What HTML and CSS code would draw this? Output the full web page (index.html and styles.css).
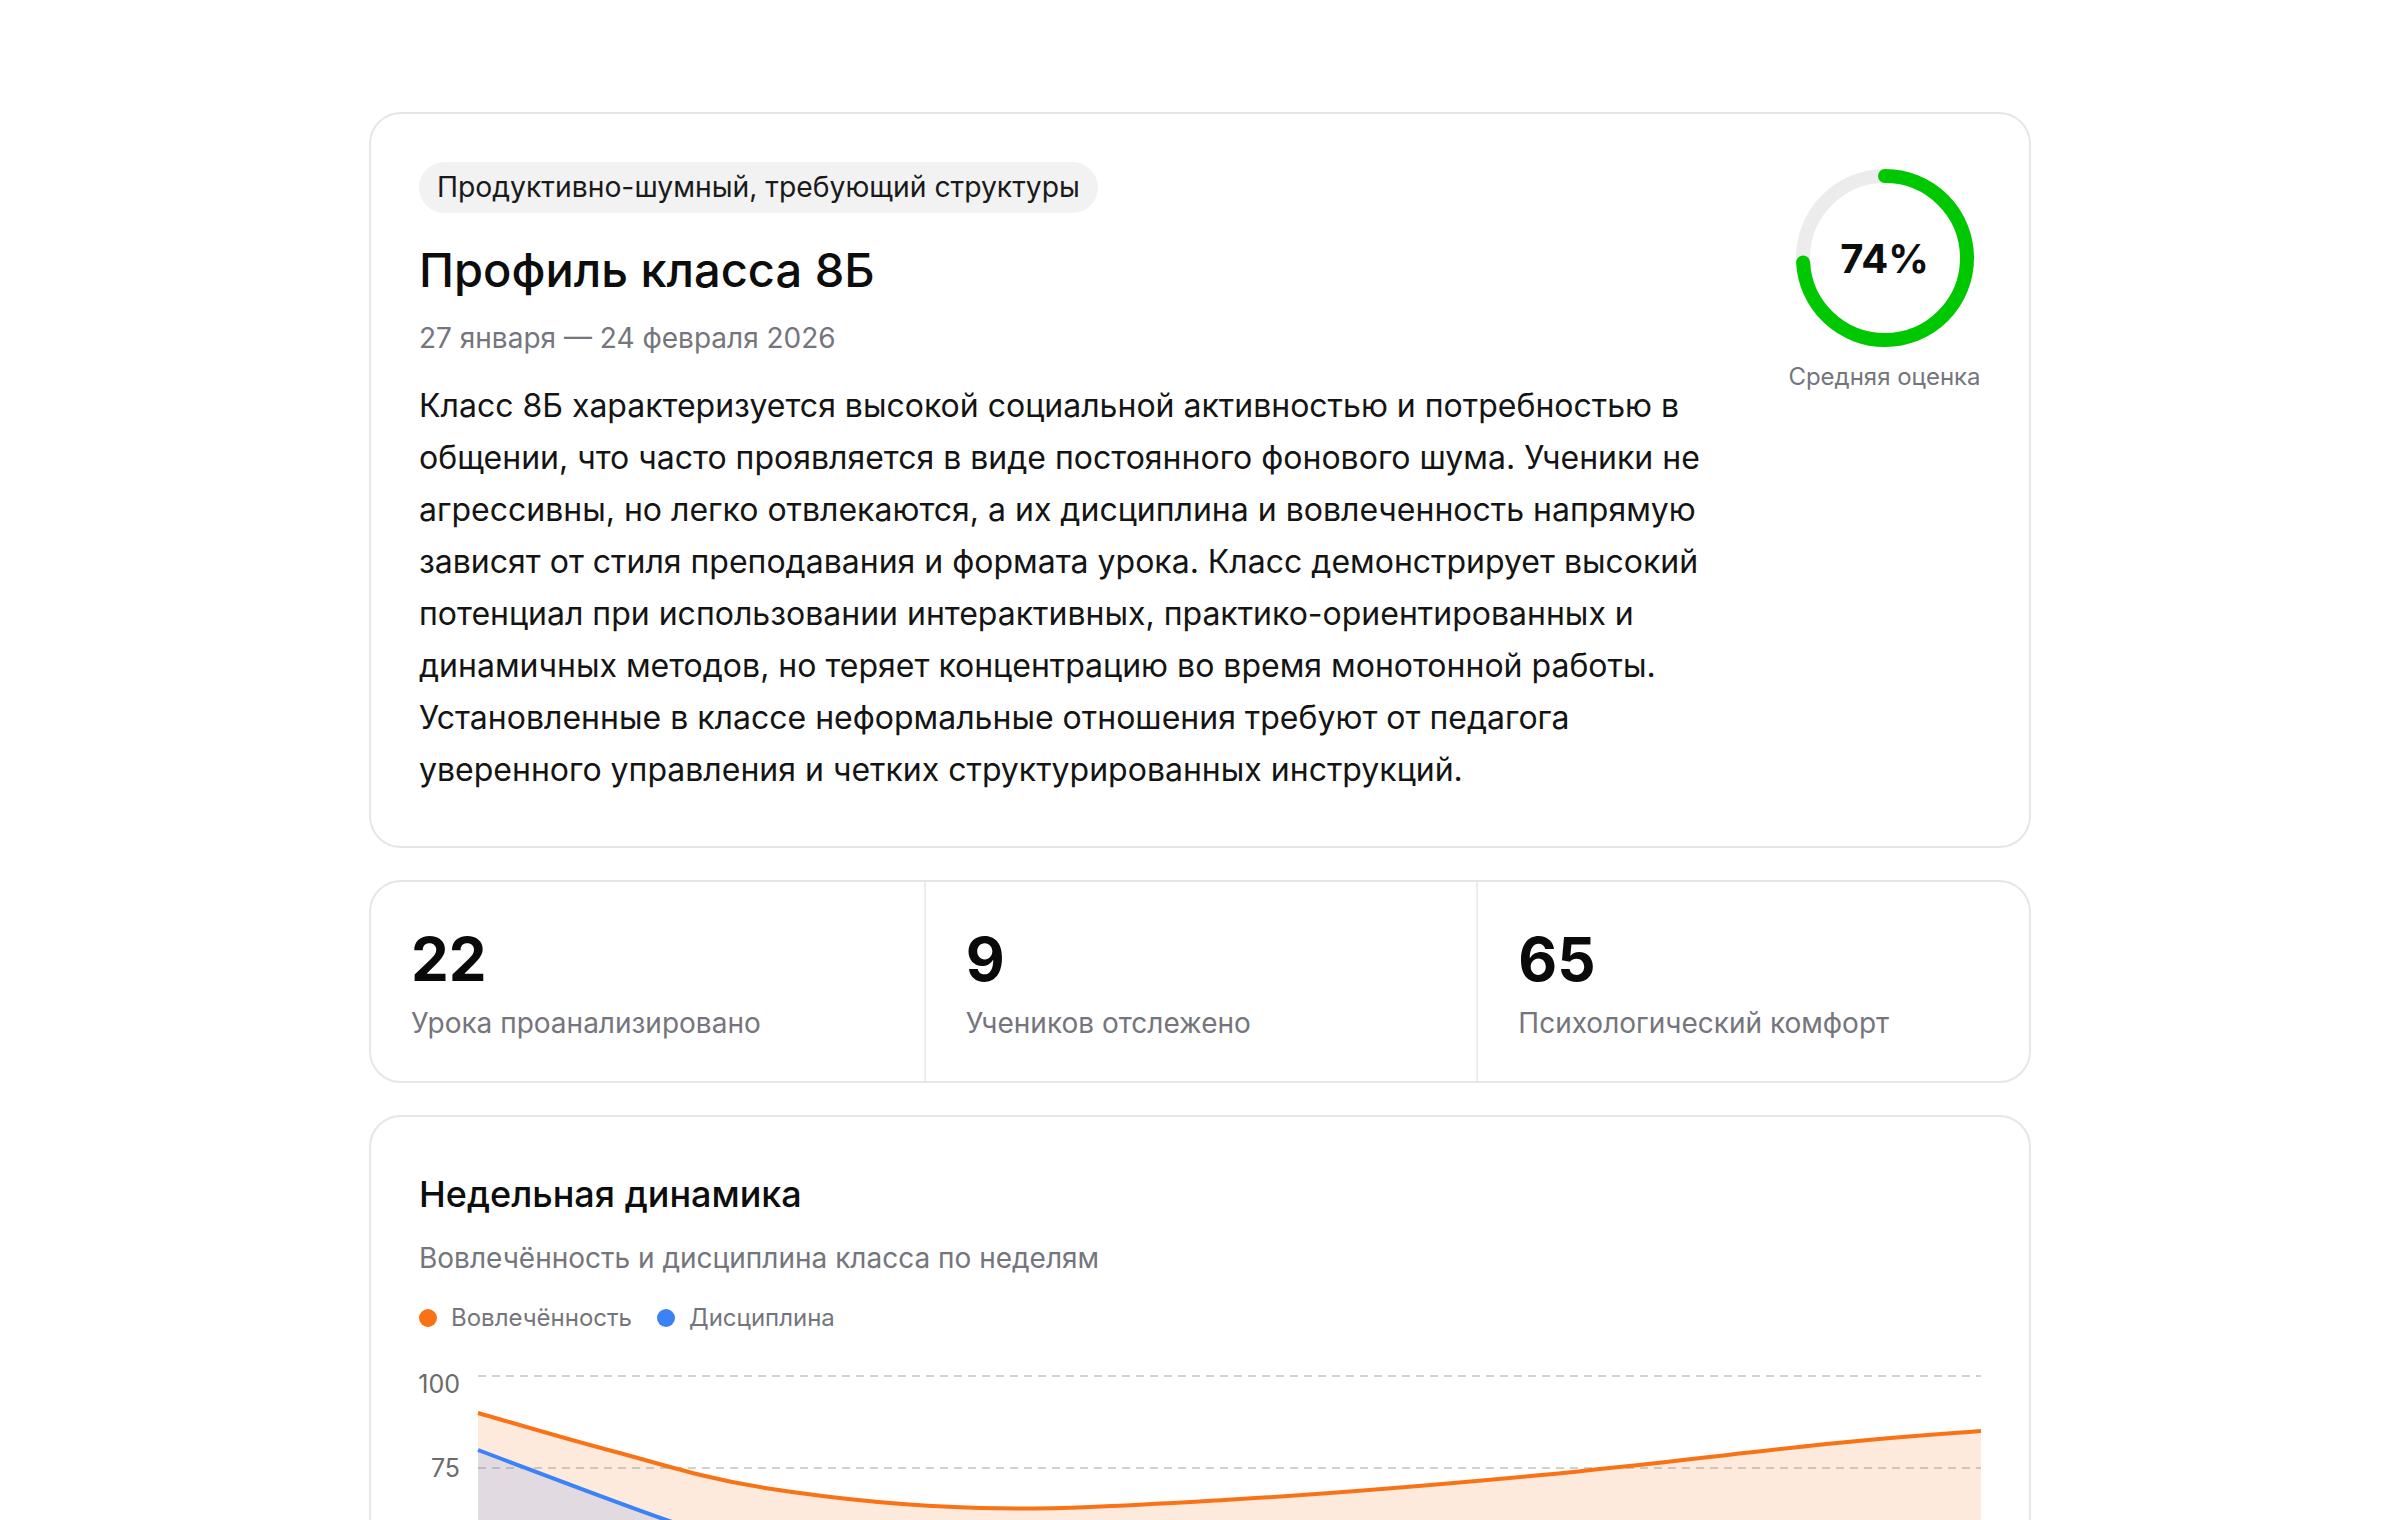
FILE: index.html
```html
<!DOCTYPE html>
<html lang="ru">
<head>
<meta charset="utf-8">
<title>Профиль класса 8Б</title>
<link rel="stylesheet" href="styles.css">
</head>
<body>
<main class="page">
  <section class="card profile">
    <div class="profile-main">
      <span class="tag">Продуктивно-шумный, требующий структуры</span>
      <h1 class="title">Профиль класса 8Б</h1>
      <div class="date">27 января — 24 февраля 2026</div>
      <p class="desc">Класс 8Б характеризуется высокой социальной активностью и потребностью в общении, что часто проявляется в виде постоянного фонового шума. Ученики не агрессивны, но легко отвлекаются, а их дисциплина и вовлеченность напрямую зависят от стиля преподавания и формата урока. Класс демонстрирует высокий потенциал при использовании интерактивных, практико-ориентированных и динамичных методов, но теряет концентрацию во время монотонной работы. Установленные в классе неформальные отношения требуют от педагога уверенного управления и четких структурированных инструкций.</p>
    </div>
    <div class="score">
      <div class="ring">
        <svg class="ring-svg" viewBox="0 0 178 178" width="178" height="178">
          <circle class="ring-track" cx="89" cy="89" r="82"></circle>
          <circle class="ring-bar" cx="89" cy="89" r="82" stroke-dasharray="381.3 515.2" transform="rotate(-90 89 89)"></circle>
        </svg>
        <span class="ring-value">74%</span>
      </div>
      <div class="score-label">Средняя оценка</div>
    </div>
  </section>

  <section class="card stats">
    <div class="stat">
      <div class="stat-num">22</div>
      <div class="stat-label">Урока проанализировано</div>
    </div>
    <div class="stat">
      <div class="stat-num">9</div>
      <div class="stat-label">Учеников отслежено</div>
    </div>
    <div class="stat">
      <div class="stat-num">65</div>
      <div class="stat-label">Психологический комфорт</div>
    </div>
  </section>

  <section class="card chart-card">
    <h2 class="chart-title">Недельная динамика</h2>
    <div class="chart-sub">Вовлечённость и дисциплина класса по неделям</div>
    <div class="legend">
      <span class="legend-item"><span class="dot dot-orange"></span>Вовлечённость</span>
      <span class="legend-item"><span class="dot dot-blue"></span>Дисциплина</span>
    </div>
    <svg class="chart" viewBox="0 0 1562 440" width="1562" height="440">
      <g class="grid">
        <line x1="59" y1="16" x2="1562" y2="16"></line>
        <line x1="59" y1="108" x2="1562" y2="108"></line>
        <line x1="59" y1="200" x2="1562" y2="200"></line>
        <line x1="59" y1="292" x2="1562" y2="292"></line>
        <line x1="59" y1="384" x2="1562" y2="384"></line>
      </g>
      <g class="ylabels">
        <text x="41" y="33">100</text>
        <text x="41" y="117">75</text>
        <text x="41" y="209">50</text>
        <text x="41" y="301">25</text>
        <text x="41" y="393">0</text>
      </g>
      <path class="area-orange" d="M59,53 C81.3,59.3 145.2,78.5 193,91 C240.8,103.5 284.7,118.5 346,128 C407.3,137.5 484.5,146 561,148 C637.5,150 713.2,145.3 805,140 C896.8,134.7 1009.8,125.5 1112,116 C1214.2,106.5 1343,90.5 1418,83 C1493,75.5 1538,73 1562,71 L1562,384 L59,384 Z"></path>
      <path class="area-blue" d="M59,90 C123,114 190,140 250,161 C310,182 370,196 435,205 C560,222 690,232 810,230 C940,228 1060,222 1186,215 C1310,208 1440,196 1562,185 L1562,384 L59,384 Z"></path>
      <path class="line-blue" d="M59,90 C123,114 190,140 250,161 C310,182 370,196 435,205 C560,222 690,232 810,230 C940,228 1060,222 1186,215 C1310,208 1440,196 1562,185"></path>
      <path class="line-orange" d="M59,53 C81.3,59.3 145.2,78.5 193,91 C240.8,103.5 284.7,118.5 346,128 C407.3,137.5 484.5,146 561,148 C637.5,150 713.2,145.3 805,140 C896.8,134.7 1009.8,125.5 1112,116 C1214.2,106.5 1343,90.5 1418,83 C1493,75.5 1538,73 1562,71"></path>
      <g class="xlabels">
        <text x="59" y="424">Нед 1</text>
        <text x="435" y="424">Нед 2</text>
        <text x="810" y="424">Нед 3</text>
        <text x="1186" y="424">Нед 4</text>
        <text x="1562" y="424">Нед 5</text>
      </g>
    </svg>
  </section>
</main>
</body>
</html>
```

FILE: styles.css
```css
* {
  box-sizing: border-box;
}

html, body {
  margin: 0;
  padding: 0;
  background: #ffffff;
}

body {
  font-family: Inter, "Noto Sans", sans-serif;
  color: #111111;
}

.page {
  width: 1662px;
  margin: 112px auto 80px;
  display: flex;
  flex-direction: column;
  gap: 32px;
}

.card {
  background: #ffffff;
  border: 2px solid #e6e6e6;
  border-radius: 32px;
}

/* ---------- profile card ---------- */
.profile {
  display: flex;
  align-items: flex-start;
  gap: 64px;
  padding: 48px 48px 50px;
}

.profile-main {
  flex: 1;
  display: flex;
  flex-direction: column;
  align-items: flex-start;
}

.tag {
  display: inline-block;
  background: #f2f2f2;
  color: #1a1a1a;
  font-size: 28.3px;
  line-height: 37px;
  padding: 7px 18px;
  border-radius: 999px;
}

.title {
  margin: 29px 0 0;
  font-size: 47px;
  line-height: 55px;
  font-weight: 500;
  color: #0d0d0d;
}

.date {
  margin-top: 22px;
  font-size: 28px;
  line-height: 39px;
  color: #75757d;
}

.desc {
  margin: 22px 0 0;
  font-size: 32px;
  line-height: 52px;
  color: #141414;
}

.score {
  width: 193px;
  flex: none;
  display: flex;
  flex-direction: column;
  align-items: center;
  padding-top: 7px;
}

.ring {
  position: relative;
  width: 178px;
  height: 178px;
}

.ring-svg {
  display: block;
}

.ring-track {
  fill: none;
  stroke: #ececec;
  stroke-width: 14;
}

.ring-bar {
  fill: none;
  stroke: #00c800;
  stroke-width: 14;
  stroke-linecap: round;
}

.ring-value {
  position: absolute;
  inset: 0;
  display: flex;
  align-items: center;
  justify-content: center;
  font-size: 40px;
  font-weight: 700;
  color: #0d0d0d;
}

.score-label {
  margin-top: 15px;
  font-size: 24px;
  line-height: 30px;
  color: #75757d;
  white-space: nowrap;
}

/* ---------- stats ---------- */
.stats {
  display: grid;
  grid-template-columns: repeat(3, 1fr);
}

.stat {
  padding: 42px 40px 40px;
}

.stat + .stat {
  border-left: 2px solid #ededed;
}

.stat-num {
  font-size: 60px;
  line-height: 70px;
  font-weight: 700;
  color: #0a0a0a;
}

.stat-label {
  margin-top: 11px;
  font-size: 28px;
  line-height: 36px;
  color: #75757d;
}

/* ---------- chart ---------- */
.chart-card {
  padding: 55px 48px 48px;
}

.chart-title {
  margin: 0;
  font-size: 36px;
  line-height: 44px;
  font-weight: 500;
  color: #0d0d0d;
}

.chart-sub {
  margin-top: 25px;
  font-size: 28px;
  line-height: 34px;
  color: #75757d;
}

.legend {
  margin-top: 27px;
  display: flex;
  gap: 25px;
  font-size: 24px;
  line-height: 31px;
  color: #75757d;
}

.legend-item {
  display: flex;
  align-items: center;
  gap: 14px;
}

.dot {
  width: 18px;
  height: 18px;
  border-radius: 50%;
}

.dot-orange {
  background: #f97316;
}

.dot-blue {
  background: #3b82f6;
}

.chart {
  display: block;
  margin-top: 27px;
  width: 1562px;
  height: 440px;
  overflow: visible;
}

.grid line {
  stroke: #d2d2d2;
  stroke-width: 2;
  stroke-dasharray: 8 6;
}

.ylabels text {
  font-family: Inter, "Noto Sans", sans-serif;
  font-size: 25px;
  fill: #6b6b6b;
  text-anchor: end;
}

.xlabels text {
  font-family: Inter, "Noto Sans", sans-serif;
  font-size: 24px;
  fill: #6b6b6b;
  text-anchor: middle;
}

.area-orange {
  fill: rgba(249, 115, 22, 0.15);
}

.area-blue {
  fill: rgba(59, 130, 246, 0.15);
}

.line-orange {
  fill: none;
  stroke: #f97316;
  stroke-width: 4;
}

.line-blue {
  fill: none;
  stroke: #3b82f6;
  stroke-width: 4;
}
```
